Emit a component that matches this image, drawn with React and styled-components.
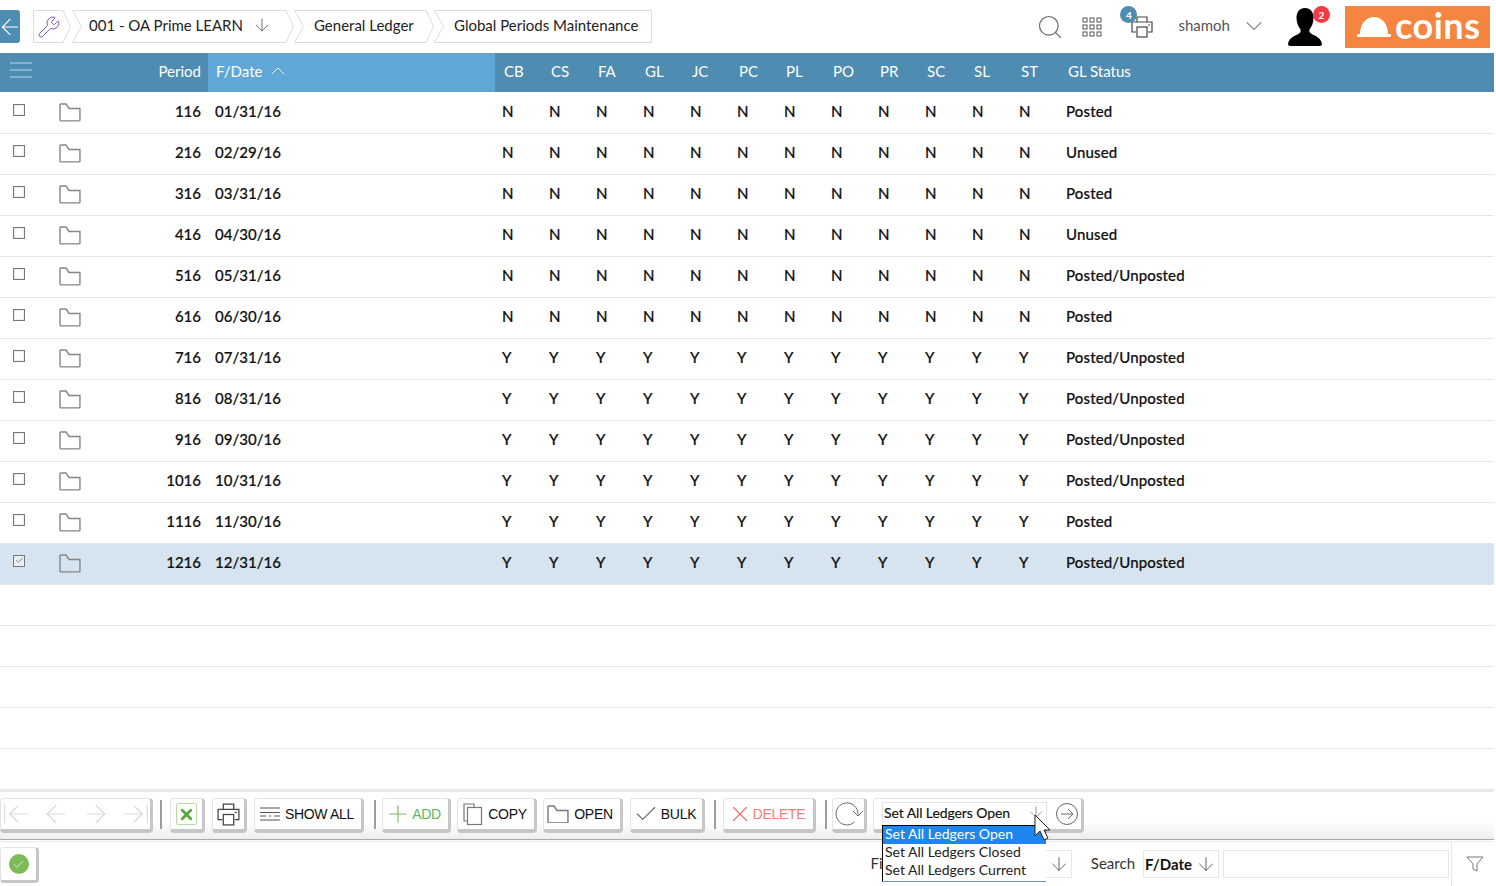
import React from "react";
import styled, { createGlobalStyle } from "styled-components";
import { ArrowDown, ArrowLeft, ArrowRight, ArrowLeftToLine, ArrowRightToLine, ChevronDown, ChevronUp, Search, Wrench, Plus, X, Check } from "lucide-react";

const GlobalStyle = createGlobalStyle`
  html, body { margin: 0; padding: 0; background: #fff; overflow: hidden; }
  body { font-family: Lato, "Liberation Sans", sans-serif; color: #111; }
`;

const Page = styled.div`
  width: 1496px;
  height: 886px;
  display: flex;
  flex-direction: column;
  overflow: hidden;
`;

/* top bar */
const TopBar = styled.div`
  height: 53px;
  flex: none;
  display: flex;
  align-items: flex-start;
  padding-top: 10px;
  box-sizing: border-box;
`;
const BackButton = styled.div`
  width: 20px;
  height: 33px;
  background: #4f8cb2;
  border-radius: 0 3px 3px 0;
  color: #fff;
  display: flex;
  align-items: center;
  justify-content: center;
  margin-right: 13px;
  overflow: hidden;
`;
const Crumbs = styled.div`
  display: flex;
  height: 33px;
`;
const CrumbBox = styled.div`
  position: relative;
  width: ${(p) => p.$w}px;
  height: 33px;
  margin-right: ${(p) => p.$gap || 0}px;
  display: flex;
  align-items: center;
  padding-left: ${(p) => p.$pad}px;
  padding-bottom: ${(p) => (p.$first ? 0 : 4)}px;
  box-sizing: border-box;
  font-size: 15px;
  color: #222;
  gap: 9px;
  & > svg.shape { position: absolute; left: 0; top: 0; }
  & > span, & > svg.ico { position: relative; }
`;
const Crumb = ({ w, first, last, pad, gap, children }) => {
  const notch = first ? 0 : 9;
  const right = last ? w - 0.5 : w - 8;
  const tip = last ? "" : `${w - 0.5},16.5 `;
  const pts = `0.5,0.5 ${right},0.5 ${tip}${right},32.5 0.5,32.5 ${notch + 0.5},16.5`;
  const flat = `0.5,0.5 ${right},0.5 ${tip}${right},32.5 0.5,32.5`;
  return (
    <CrumbBox $w={w} $pad={pad} $gap={gap} $first={first}>
      <svg className="shape" width={w} height="33">
        <polygon points={first ? flat : pts} fill="#fff" stroke="#dcdcdc" />
      </svg>
      {children}
    </CrumbBox>
  );
};
const TopRight = styled.div`
  margin-left: auto;
  display: flex;
  align-items: center;
  height: 42px;
  margin-top: -4px;
  padding-right: 6px;
`;
const IconSlot = styled.div`
  position: relative;
  width: ${(p) => p.$w}px;
  margin-right: ${(p) => p.$mr || 0}px;
  height: 42px;
  display: flex;
  align-items: center;
  justify-content: center;
  flex: none;
`;
const Badge = styled.span`
  position: absolute;
  left: ${(p) => p.$x}px;
  top: ${(p) => p.$y}px;
  width: 17px;
  height: 17px;
  border-radius: 50%;
  background: ${(p) => p.$bg};
  color: #fff;
  font-size: 10px;
  font-weight: 700;
  display: flex;
  align-items: center;
  justify-content: center;
`;
const UserName = styled.span`
  font-size: 15px;
  color: #555;
  margin-right: 15px;
  margin-top: -4px;
`;
const Logo = styled.div`
  width: 145px;
  height: 42px;
  background: #f58540;
  display: flex;
  align-items: center;
  padding-left: 12px;
  box-sizing: border-box;
  gap: 4px;
  color: #fff;
  font-family: Lato, sans-serif;
  font-weight: 700;
  font-size: 36px;
  letter-spacing: 0.5px;
  line-height: 1;
  & span { margin-top: -5px; }
`;

/* grid */
const GridCols = "38px 50px 113px 7px 287px repeat(12, 47px) 1fr";
const HeaderRow = styled.div`
  height: 39px;
  flex: none;
  width: 1494px;
  background: #4f8cb2;
  color: #fff;
  display: grid;
  grid-template-columns: ${GridCols};
  align-items: center;
  font-size: 15px;
`;
const HeadCell = styled.div`
  padding-left: ${(p) => p.$pl ?? 9}px;
  padding-bottom: 4px;
  text-align: ${(p) => p.$align || "left"};
`;
const SortCell = styled.div`
  grid-column: 5;
  height: 39px;
  box-sizing: border-box;
  background: #5fa7d6;
  display: flex;
  align-items: center;
  padding: 0 0 4px 8px;
  gap: 4px;
`;
const MenuCell = styled.div`
  padding: 0 0 5px 10px;
  display: flex;
  color: #94bcd6;
`;
const Rows = styled.div`
  flex: 1;
  width: 1494px;
  padding-top: 1px;
  overflow: hidden;
`;
const Row = styled.div`
  height: 41px;
  box-sizing: border-box;
  border-bottom: 1px solid #e6e6e6;
  padding-bottom: 4px;
  display: grid;
  grid-template-columns: ${GridCols};
  align-items: center;
  font-size: 15px;
  font-weight: 500;
  color: #111;
  background: ${(p) => (p.$selected ? "#d5e4ef" : "#fff")};
  -webkit-text-stroke: 0.2px #111;
`;
const CheckCell = styled.div`
  padding-left: 13px;
  margin-top: -3px;
  display: flex;
`;
const Box = styled.div`
  width: 10px;
  height: 10px;
  border: 1px solid #777;
  background: ${(p) => (p.$on ? "#e4eef5" : "#fff")};
  box-shadow: inset 0 0 0 1px #eee;
  display: flex;
  align-items: center;
  justify-content: center;
  color: #666;
`;
const FolderCell = styled.div`
  padding-left: 21px;
  display: flex;
  margin-top: 3px;
`;
const PeriodCell = styled.div`
  text-align: right;
`;
const DateCell = styled.div`
  grid-column: 5;
  padding-left: 7px;
`;
const FlagCell = styled.div`
  padding-left: 7px;
`;
const StatusCell = styled.div`
  padding-left: 7px;
  letter-spacing: 0.13px;
`;

/* toolbar */
const Toolbar = styled.div`
  height: 51px;
  width: 1494px;
  flex: none;
  box-sizing: border-box;
  border-top: 3px solid #e9e9e9;
  border-bottom: 1px solid #aaa;
  background: linear-gradient(#fff 62%, #eeeeee);
  display: flex;
  align-items: flex-start;
  padding-top: 6px;
`;
const Btn = styled.div`
  width: ${(p) => p.$w}px;
  height: 35px;
  margin-right: ${(p) => p.$mr ?? 7}px;
  padding-right: ${(p) => p.$pr || 0}px;
  box-sizing: border-box;
  background: #fff;
  border: 1px solid #e4e4e4;
  border-right: 3px solid #c6c6c6;
  border-bottom: 4px solid #c6c6c6;
  border-radius: 4px;
  display: flex;
  align-items: center;
  justify-content: center;
  gap: ${(p) => p.$gap ?? 5}px;
  font-family: "Liberation Sans", Arial, sans-serif;
  font-size: 14px;
  letter-spacing: -0.3px;
  color: ${(p) => p.$color || "#111"};
  flex: none;
`;
const Pager = styled(Btn)`
  justify-content: flex-start;
  gap: 10px;
  color: #d8d8d8;
`;
const Sep = styled.div`
  width: 2px;
  height: 29px;
  margin: 2px ${(p) => p.$r ?? 7}px 0 ${(p) => p.$l ?? 7}px;
  background: #9c9c9c;
  flex: none;
`;
const ExcelMark = styled.div`
  width: 21px;
  height: 22px;
  box-sizing: border-box;
  border: 1px solid #b9d8a5;
  border-radius: 2px;
  color: #5aa63c;
  display: flex;
  align-items: center;
  justify-content: center;
`;
const ActionGroup = styled(Btn)`
  position: relative;
  justify-content: flex-start;
  gap: 0;
  padding-left: 8px;
  font-family: Lato, sans-serif;
  letter-spacing: 0;
  margin-right: 0;
`;
const SelectBox = styled.div`
  width: 165px;
  height: 25px;
  box-sizing: border-box;
  border: 1px solid #e3e3e3;
  display: flex;
  align-items: center;
  justify-content: space-between;
  padding: 0 1px 4px 1px;
  font-size: 14px;
  letter-spacing: -0.1px;
  color: #111;
  margin-right: 8px;
  -webkit-text-stroke: 0.15px #111;
  flex: none;
`;
const DropList = styled.div`
  position: absolute;
  left: 8px;
  top: 26px;
  width: 164px;
  box-sizing: border-box;
  height: 57px;
  background: #fff;
  border-left: 1px solid #000;
  border-top: 1px solid #000;
  border-bottom: 1px solid #6d93c4;
  z-index: 5;
  font-size: 14px;
`;
const DropItem = styled.div`
  height: 18px;
  line-height: 16px;
  padding-left: 2px;
  background: ${(p) => (p.$active ? "#1e87ef" : "transparent")};
  color: ${(p) => (p.$active ? "#fff" : "#222")};
`;
const Pointer = styled.div`
  position: absolute;
  left: 160px;
  top: 15px;
  z-index: 6;
  display: flex;
`;

/* bottom bar */
const BottomBar = styled.div`
  flex: none;
  height: 45px;
  width: 1494px;
  box-sizing: border-box;
  display: flex;
  align-items: flex-start;
  margin-top: 1px;
  border-top: 1px solid #ececec;
`;
const StatusBtn = styled(Btn)`
  width: 39px;
  height: 36px;
  margin: 5px 0 0 0;
  border-bottom-width: 3px;
`;
const GreenDot = styled.div`
  width: 20px;
  height: 20px;
  border-radius: 50%;
  background: #7dbb55;
  color: #fff;
  display: flex;
  align-items: center;
  justify-content: center;
`;
const FilterGroup = styled.div`
  margin-left: auto;
  margin-right: -2px;
  display: flex;
  align-items: center;
  height: 44px;
  font-size: 15px;
  color: #333;
`;
const Label = styled.span`
  margin-right: ${(p) => p.$mr}px;
  margin-top: -3px;
`;
const Field = styled.div`
  width: ${(p) => p.$w}px;
  height: 28px;
  box-sizing: border-box;
  border: 1px solid #e6e6e6;
  margin-right: ${(p) => p.$mr || 0}px;
  display: flex;
  align-items: center;
  justify-content: space-between;
  padding: 0 1px 1px 1px;
  color: #111;
  font-weight: 700;
  font-size: 15px;
  flex: none;
`;
const FunnelCell = styled.div`
  width: 45px;
  height: 44px;
  box-sizing: border-box;
  border-left: 1px solid #e6e6e6;
  padding-left: 2px;
  display: flex;
  align-items: center;
  justify-content: center;
  margin-left: 2px;
`;

const Folder = ({ size = 22, color = "#858585" }) => (
  <svg width={size} height={size * 0.86} viewBox="0 0 22 19" fill="none" stroke={color} strokeWidth="1.4">
    <path d="M1 2.500V17a1 1 0 0 0 1 1h18a1 1 0 0 0 1-1V5.500H10L7 1H2a1 1 0 0 0-1 1.500z" />
  </svg>
);
const Printer = ({ size = 24 }) => (
  <svg width={size} height={size} viewBox="0 0 24 24" fill="none" stroke="#444" strokeWidth="1.2">
    <path d="M7 7V2h10v5" />
    <path d="M6 17H2V7h20v10h-4" />
    <rect x="7" y="12" width="10" height="10" fill="#fff" />
    <path d="M18 10h2" />
  </svg>
);
const Dots = () => (
  <svg width="20" height="20" viewBox="0 0 20 20" fill="none" stroke="#555">
    {[1, 8, 15].map((y) =>
      [1, 8, 15].map((x) => <rect key={`${x}${y}`} x={x} y={y} width="4" height="4" />)
    )}
  </svg>
);
const Hamburger = () => (
  <svg width="22" height="16" viewBox="0 0 22 16" stroke="currentColor" strokeWidth="1.5">
    <path d="M0 1h22M0 8h22M0 15h22" />
  </svg>
);
const ListIcon = () => (
  <svg width="20" height="16" viewBox="0 0 20 16" stroke="#555" fill="none">
    <path d="M0 2h20M0 6.500h20M9 10h2M0 10h6M14 10h6M0 14h20" />
  </svg>
);
const CopyIcon = () => (
  <svg width="20" height="23" viewBox="0 0 20 23" fill="none" stroke="#777" strokeWidth="1.2">
    <path d="M4 18H1V1h10v3" />
    <rect x="4.500" y="4.500" width="14" height="17" />
  </svg>
);
const Refresh = () => (
  <svg width="30" height="26" viewBox="0 0 30 26" fill="none" stroke="#666">
    <path d="M20.500 21A11 11 0 1 1 24 13.500" />
    <path d="M19 10l5 5 5-5" />
  </svg>
);
const Silhouette = () => (
  <svg width="34" height="38" viewBox="0 0 34 38">
    <path fill="#000" d="M17 0c5.500 0 8.500 4 8.500 10 0 5-2 9-4 11.500-.5 2 0 3.500 3 5C29 28.500 33 30.500 34 36c0 1-1 2-2 2H2c-1 0-2-1-2-2 1-5.500 5-7.500 9.500-9.500 3-1.500 3.500-3 3-5C10.500 19 8.500 15 8.500 10 8.500 4 11.500 0 17 0z" />
  </svg>
);
const Hat = () => (
  <svg width="34" height="20" viewBox="0 0 34 20">
    <path fill="#fff" d="M3 17C3 7 9 0 17 0s14 7 14 17h2.500c.5 1 .5 2 0 3H.5c-.5-1-.5-2 0-3z" />
  </svg>
);
const Funnel = () => (
  <svg width="18" height="16" viewBox="0 0 18 16" fill="none" stroke="#777">
    <path d="M1 1h16l-6 7v7l-4-2V8z" />
  </svg>
);
const Cursor = () => (
  <svg width="17" height="28" viewBox="0 0 17 28">
    <path fill="#fff" stroke="#222" d="M1 1v21l5-5 4 9 4-2-4-8h6z" />
  </svg>
);

const FLAGS = ["CB", "CS", "FA", "GL", "JC", "PC", "PL", "PO", "PR", "SC", "SL", "ST"];
const DATA = [
  ["116", "01/31/16", "N", "Posted"],
  ["216", "02/29/16", "N", "Unused"],
  ["316", "03/31/16", "N", "Posted"],
  ["416", "04/30/16", "N", "Unused"],
  ["516", "05/31/16", "N", "Posted/Unposted"],
  ["616", "06/30/16", "N", "Posted"],
  ["716", "07/31/16", "Y", "Posted/Unposted"],
  ["816", "08/31/16", "Y", "Posted/Unposted"],
  ["916", "09/30/16", "Y", "Posted/Unposted"],
  ["1016", "10/31/16", "Y", "Posted/Unposted"],
  ["1116", "11/30/16", "Y", "Posted"],
  ["1216", "12/31/16", "Y", "Posted/Unposted"],
];

export default function App() {
  return (
    <Page>
      <GlobalStyle />
      <TopBar>
        <BackButton><ArrowLeft size={26} strokeWidth={1} style={{ flex: "none" }} /></BackButton>
        <Crumbs>
          <Crumb w={38} first pad={4} gap={1}>
            <Wrench className="ico" size={24} strokeWidth={1} color="#7a5bb5" />
          </Crumb>
          <Crumb w={222} pad={17}>
            <span>001 - OA Prime LEARN</span>
            <ArrowDown className="ico" size={20} strokeWidth={1} color="#555" />
          </Crumb>
          <Crumb w={140} pad={20}><span>General Ledger</span></Crumb>
          <Crumb w={218} last pad={20}><span>Global Periods Maintenance</span></Crumb>
        </Crumbs>
        <TopRight>
          <IconSlot $w={24} $mr={20}><Search size={28} strokeWidth={1} color="#666" style={{ flex: "none" }} /></IconSlot>
          <IconSlot $w={20} $mr={28}><Dots /></IconSlot>
          <IconSlot $w={24} $mr={24}>
            <Printer />
            <Badge $x={-10} $y={0} $bg="#4f8cb2">4</Badge>
          </IconSlot>
          <UserName>shamoh</UserName>
          <IconSlot $w={18} $mr={25}><ChevronDown size={28} strokeWidth={0.9} color="#666" style={{ flex: "none", marginTop: -3 }} /></IconSlot>
          <IconSlot $w={34} $mr={23}>
            <Silhouette />
            <Badge $x={25} $y={0} $bg="#f23b45">2</Badge>
          </IconSlot>
          <Logo><Hat /><span>coins</span></Logo>
        </TopRight>
      </TopBar>

      <HeaderRow>
        <MenuCell><Hamburger /></MenuCell>
        <div />
        <HeadCell $pl={0} $align="right">Period</HeadCell>
        <SortCell>F/Date <ChevronUp size={24} strokeWidth={1} /></SortCell>
        {FLAGS.map((f) => <HeadCell key={f}>{f}</HeadCell>)}
        <HeadCell>GL Status</HeadCell>
      </HeaderRow>

      <Rows>
        {DATA.map((r, i) => {
          const selected = i === DATA.length - 1;
          return (
            <Row key={r[0]} $selected={selected}>
              <CheckCell>
                <Box $on={selected}>{selected && <Check size={9} strokeWidth={2} />}</Box>
              </CheckCell>
              <FolderCell><Folder /></FolderCell>
              <PeriodCell>{r[0]}</PeriodCell>
              <DateCell>{r[1]}</DateCell>
              {FLAGS.map((f) => <FlagCell key={f}>{r[2]}</FlagCell>)}
              <StatusCell>{r[3]}</StatusCell>
            </Row>
          );
        })}
        {[0, 1, 2, 3, 4].map((i) => <Row key={i} />)}
      </Rows>

      <Toolbar>
        <Pager $w={153} $mr={0}>
          <ArrowLeftToLine size={30} strokeWidth={0.9} style={{ flex: "none" }} />
          <ArrowLeft size={30} strokeWidth={0.9} style={{ flex: "none" }} />
          <ArrowRight size={30} strokeWidth={0.9} style={{ flex: "none" }} />
          <ArrowRightToLine size={30} strokeWidth={0.9} style={{ flex: "none" }} />
        </Pager>
        <Sep $r={8} />
        <Btn $w={35}><ExcelMark><X size={17} strokeWidth={4} /></ExcelMark></Btn>
        <Btn $w={35}><Printer size={25} /></Btn>
        <Btn $w={110} $mr={0} $pr={2}><ListIcon /> SHOW ALL</Btn>
        <Sep $l={10} $r={6} />
        <Btn $w={69} $mr={6} $color="#5cb85c" $gap={0} $pr={6}><Plus size={28} strokeWidth={1} color="#7dbb6a" /> ADD</Btn>
        <Btn $w={80} $mr={6} $pr={2}><CopyIcon /> COPY</Btn>
        <Btn $w={80} $pr={4}><Folder size={22} color="#777" /> OPEN</Btn>
        <Btn $w={75} $mr={0} $gap={2} $pr={4}><Check size={26} strokeWidth={1} color="#666" /> BULK</Btn>
        <Sep $l={9} />
        <Btn $w={93} $color="#f47c7c" $mr={0} $gap={0} $pr={5}><X size={26} strokeWidth={1} color="#f26a6a" /> DELETE</Btn>
        <Sep $l={9} $r={5} />
        <Btn $w={35} $mr={6}><Refresh /></Btn>
        <ActionGroup $w={211}>
          <SelectBox>
            Set All Ledgers Open
            <ArrowDown size={18} strokeWidth={1} color="#777" />
          </SelectBox>
          <svg width="24" height="24" viewBox="0 0 24 24" fill="none" stroke="#666">
            <circle cx="12" cy="12" r="10.500" />
            <path d="M6 12h12M13 7l5 5-5 5" />
          </svg>
          <DropList>
            <DropItem $active>Set All Ledgers Open</DropItem>
            <DropItem>Set All Ledgers Closed</DropItem>
            <DropItem>Set All Ledgers Current</DropItem>
          </DropList>
          <Pointer><Cursor /></Pointer>
        </ActionGroup>
      </Toolbar>

      <BottomBar>
        <StatusBtn><GreenDot><Check size={13} strokeWidth={1.2} /></GreenDot></StatusBtn>
        <FilterGroup>
          <Label $mr={6}>Filter</Label>
          <Field $w={161} $mr={19}>
            <span />
            <ArrowDown size={22} strokeWidth={1} color="#555" />
          </Field>
          <Label $mr={8}>Search</Label>
          <Field $w={76} $mr={4}>
            F/Date
            <ArrowDown size={22} strokeWidth={1} color="#555" />
          </Field>
          <Field $w={226} />
          <FunnelCell><Funnel /></FunnelCell>
        </FilterGroup>
      </BottomBar>
    </Page>
  );
}
